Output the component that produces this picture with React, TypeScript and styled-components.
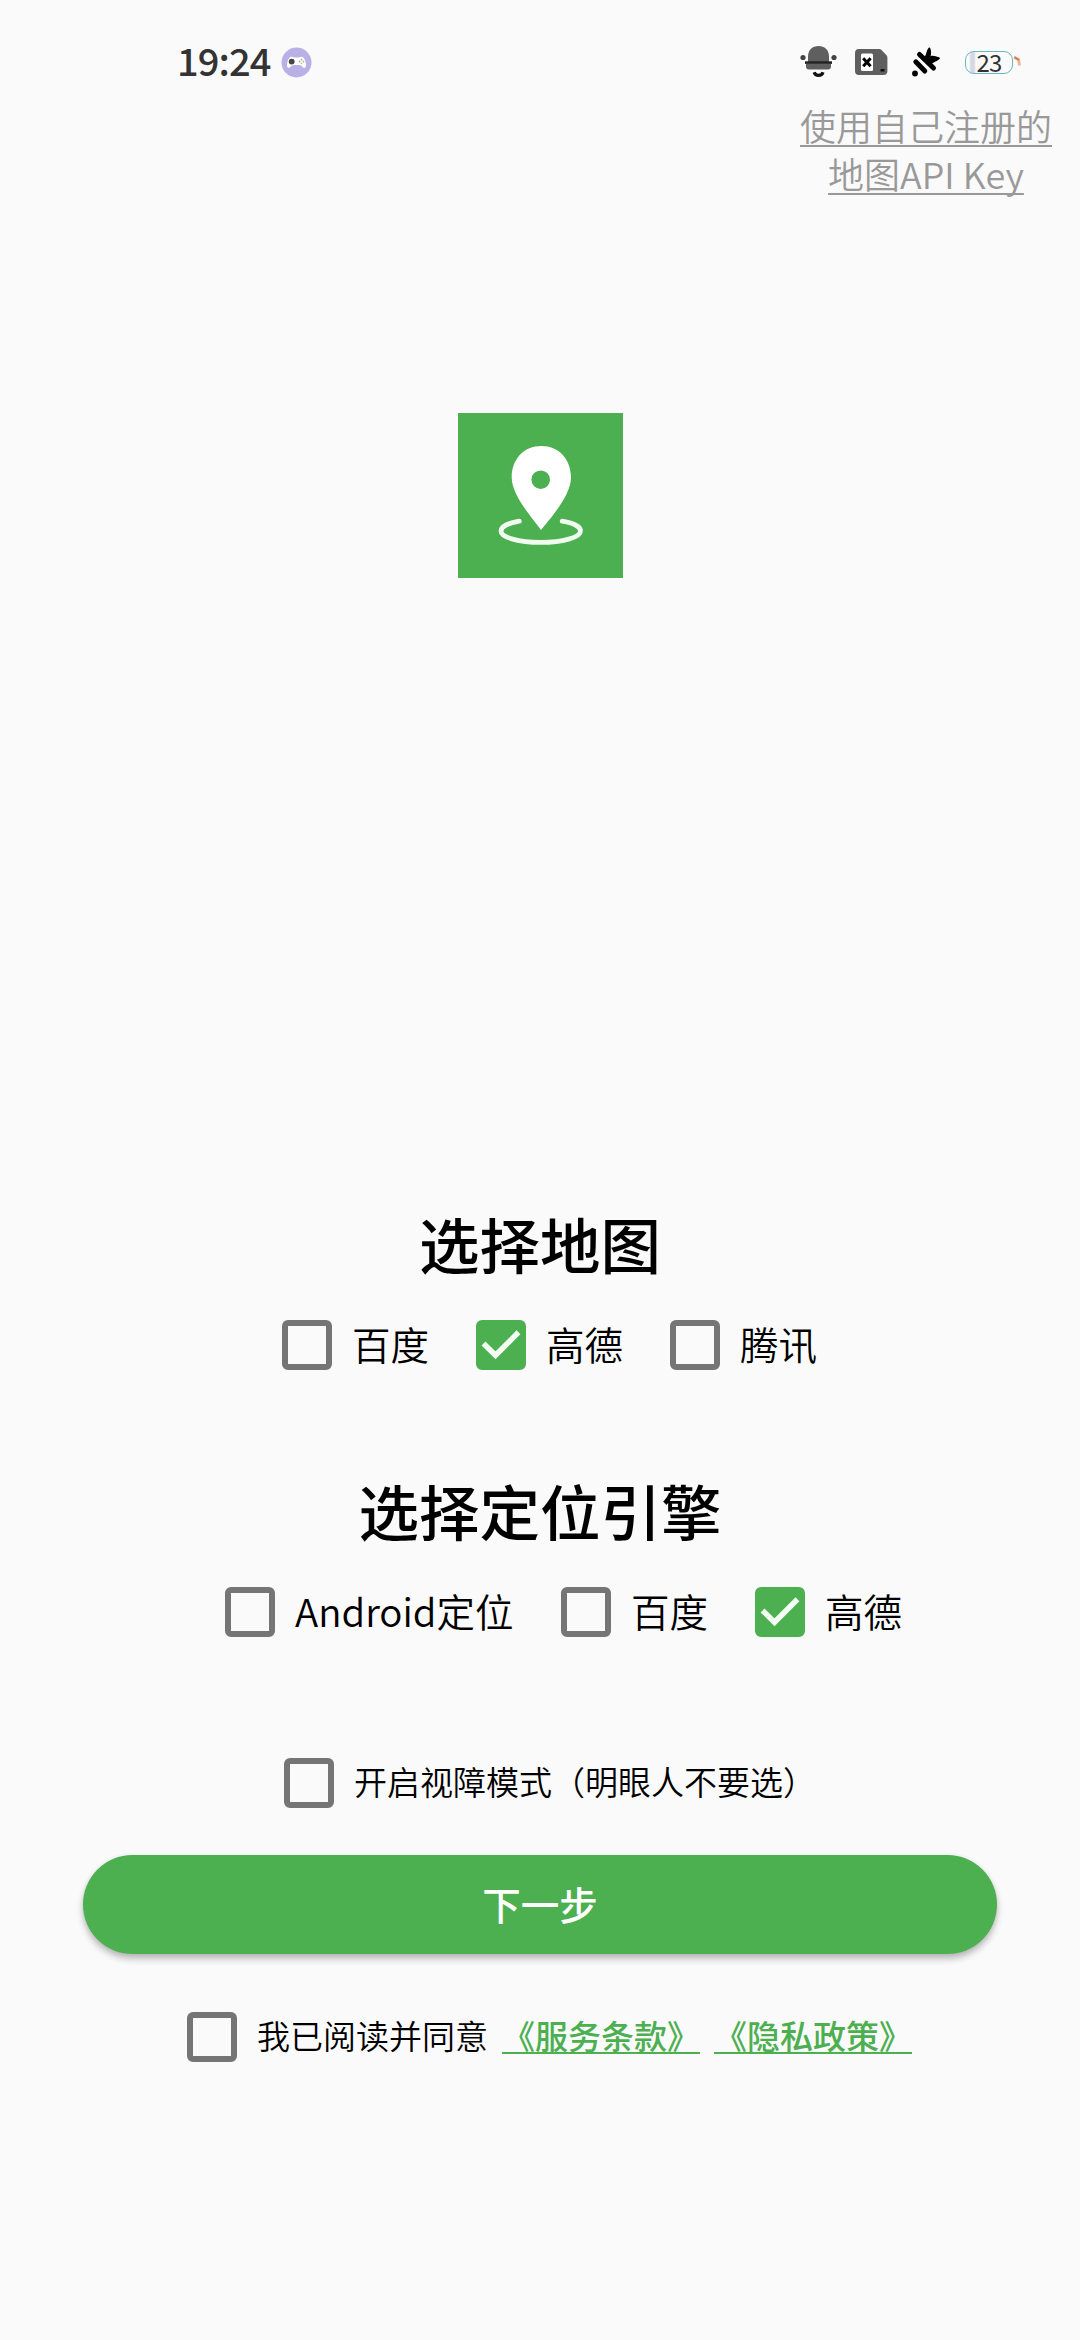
import React, { useState } from "react";
import styled, { createGlobalStyle } from "styled-components";

const GREEN = "#4caf50";

const GlobalStyle = createGlobalStyle`
  body {
    margin: 0;
    background: #fafafa;
    color: #000;
    font-family: "Noto Sans CJK SC", "Noto Sans", sans-serif;
  }
`;

const Screen = styled.main`
  box-sizing: border-box;
  width: 1080px;
  height: 2340px;
  display: flex;
  flex-direction: column;
  background: #fafafa;
  overflow: hidden;
`;

const StatusBar = styled.header`
  box-sizing: border-box;
  height: 101px;
  padding: 22px 58px 0 177px;
  display: flex;
  align-items: flex-start;
  justify-content: space-between;
`;

const StatusGroup = styled.div<{ $gap: number }>`
  display: flex;
  align-items: center;
  gap: ${(p) => p.$gap}px;
  height: 80px;
`;

const Clock = styled.time`
  width: 94px;
  font-size: 38px;
  font-weight: 500;
  line-height: 76px;
  height: 80px;
  letter-spacing: -0.9px;
  color: #333;
  white-space: nowrap;
`;

const KeyLink = styled.a`
  align-self: flex-end;
  width: 252px;
  margin-right: 28px;
  font-size: 36px;
  font-weight: 350;
  line-height: 48px;
  text-align: center;
  color: #999;
  white-space: nowrap;
  text-decoration: underline;
  text-decoration-thickness: 2px;
  text-underline-offset: 4px;
  text-decoration-skip-ink: none;
`;

const Logo = styled.div`
  align-self: center;
  width: 165px;
  height: 165px;
  margin-top: 216px;
  background: ${GREEN};
`;

const Heading = styled.h1<{ $top: number }>`
  margin: ${(p) => p.$top}px 0 0;
  height: 80px;
  line-height: 76px;
  font-size: 60.5px;
  font-weight: 500;
  text-align: center;
`;

const OptionRow = styled.div<{ $top: number; $left: number }>`
  display: flex;
  align-items: center;
  gap: 47px;
  height: 50px;
  margin-top: ${(p) => p.$top}px;
  padding-left: ${(p) => p.$left}px;
`;

const Option = styled.label<{ $size: number }>`
  display: flex;
  align-items: center;
  gap: 20px;
  height: 50px;
  font-size: ${(p) => p.$size}px;
  font-weight: 350;
  white-space: nowrap;
`;

const Box = styled.span<{ $on: boolean }>`
  box-sizing: border-box;
  flex: none;
  width: 50px;
  height: 50px;
  border: 6px solid ${(p) => (p.$on ? GREEN : "#757575")};
  border-radius: 6px;
  background: ${(p) => (p.$on ? GREEN : "transparent")};
  display: flex;
  align-items: center;
  justify-content: center;

  svg {
    flex: none;
  }
`;

const OptionText = styled.span<{ $width?: number }>`
  width: ${(p) => (p.$width ? `${p.$width}px` : "auto")};
  height: 50px;
  line-height: 47px;
`;

const NextButton = styled.button`
  align-self: center;
  width: 914px;
  height: 99px;
  margin-top: 47px;
  padding: 0 0 2px;
  border: 0;
  border-radius: 50px;
  background: ${GREEN};
  color: #fff;
  font: 500 38.5px/97px "Noto Sans CJK SC", sans-serif;
  box-shadow: 0 5px 7px rgba(0, 0, 0, 0.24), 0 1px 5px rgba(0, 0, 0, 0.08);
`;

const Agreement = styled.div`
  display: flex;
  align-items: center;
  height: 50px;
  margin-top: 58px;
  padding-left: 187px;
`;

const TermsLink = styled.a`
  margin-left: 14px;
  height: 50px;
  font-size: 33px;
  font-weight: 500;
  line-height: 47px;
  color: ${GREEN};
  white-space: nowrap;
  text-decoration: underline;
  text-decoration-thickness: 2px;
  text-underline-offset: 3px;
  text-decoration-skip-ink: none;
`;

function GameIcon() {
  return (
    <svg width="31" height="31" viewBox="0 0 31 31">
      <circle cx="15.5" cy="15.5" r="15" fill="#b9b0e6" />
      <path
        d="M10 9.800C12 9.300 12.400 10.500 15.500 10.500S19 9.300 21 9.800C23.800 10.500 25.200 16 24.900 19.100C24.700 21.400 22.500 21.300 21.100 19.500C20.300 18.500 19.600 18 15.500 18S10.700 18.500 9.900 19.500C8.500 21.300 6.300 21.400 6.100 19.100C5.800 16 7.200 10.500 10 9.800z"
        fill="#fff"
      />
      <circle cx="10.700" cy="14.600" r="2.900" fill="#444" />
      <g fill="#aaa">
        <circle cx="20.500" cy="12.600" r=".9" />
        <circle cx="20.500" cy="16.400" r=".9" fill="#b8c860" />
        <circle cx="18.600" cy="14.500" r=".9" />
        <circle cx="22.400" cy="14.500" r=".9" fill="#d9a0a0" />
      </g>
    </svg>
  );
}

function BellIcon() {
  return (
    <svg width="37" height="34" viewBox="0 0 37 34">
      <path d="M8 17V11.500C8 5 12.500 1 18.500 1S29 5 29 11.500V17z" fill="#5f5f5f" />
      <path d="M6 19h25v2.500a3 3 0 0 1-3 3H9a3 3 0 0 1-3-3z" fill="#5f5f5f" />
      <path d="M5 16.300h27v2.600H5z" fill="#222" />
      <path d="M14.200 27.200a4.600 4.600 0 0 0 8.800 0" fill="none" stroke="#111" strokeWidth="3.200" />
      <circle cx="3" cy="12.500" r="2.600" fill="#444" />
      <circle cx="34" cy="12.500" r="2.600" fill="#444" />
    </svg>
  );
}

const SimSvg = styled.svg`
  margin: 0 6px 0 0;
`;

function SimIcon() {
  return (
    <SimSvg width="33" height="28" viewBox="0 0 33 28">
      <path
        d="M4 1h20.500a3 3 0 0 1 2 .9l5 5.300a3 3 0 0 1 .9 2V23a4 4 0 0 1-4 4H4a4 4 0 0 1-4-4V5a4 4 0 0 1 4-4z"
        fill="#5f5f5f"
      />
      <rect x="6" y="5.500" width="12" height="17.500" rx="1.500" fill="#fff" />
      <path d="M8.200 10.300l7.400 8M15.600 10.300l-7.400 8" stroke="#000" strokeWidth="3" />
      <rect x="25.500" y="21" width="4" height="2.500" fill="#111" />
    </SimSvg>
  );
}

function SatelliteIcon() {
  return (
    <svg width="28" height="30" viewBox="0 0 28 30">
      <g stroke="#000" strokeLinecap="round" strokeWidth="5" fill="none">
        <path d="M7.500 7.500l14 13.500" />
        <path d="M3.800 14.800l9 9.200" />
      </g>
      <path
        d="M12 10C14.500 9 14 4 16.500 1C17.200.2 18 .4 18.300 1.200C19.300 4 19.300 7 18.600 9.300C21 8 23.500 9.500 27 10.200C28.200 10.600 28.200 11.500 27.200 12.300C24.500 14.500 21.500 15.500 19 17z"
        fill="#000"
      />
      <circle cx="3" cy="26.500" r="2.900" fill="#000" />
    </svg>
  );
}

const BatteryWrap = styled.div`
  display: flex;
  align-items: flex-start;
  margin-left: 7px;
`;

const BatteryShell = styled.div`
  box-sizing: border-box;
  width: 48px;
  height: 23px;
  border: 1.5px solid #69b7c4;
  border-radius: 9px;
  background: linear-gradient(90deg, #fafafa 3px, #d4d8e2 5px, #d4d8e2 8px, #fafafa 10px);
  font-size: 24px;
  line-height: 19px;
  letter-spacing: -0.8px;
  text-align: center;
  color: #333;
`;

function BatteryTip() {
  return (
    <svg width="9" height="18" viewBox="0 0 9 18">
      <path d="M1 6.500L5.500 8.500L6.500 14.500" fill="none" stroke="#f3b08e" strokeWidth="2.800" />
      <path d="M1.500 6l4.500 3" stroke="#cc7a55" strokeWidth="1.800" />
    </svg>
  );
}

function PinArt() {
  return (
    <svg width="165" height="165" viewBox="0 0 165 165">
      <path
        fillRule="evenodd"
        fill="#fff"
        d="M83 117C76 107 53.700 83 53.700 64.500C53.700 46 66 33 83.300 33S113 46 113 64.500C113 83 91 107 83 117zM82.700 57.400a9.300 9.300 0 1 0 0 18.600a9.300 9.300 0 1 0 0-18.600z"
      />
      <path
        d="M61.300 108.200C50 110 43 113.600 43 118C43 124.500 61 129.400 82.700 129.400S122.500 124.500 122.500 118C122.500 113.600 115.500 110 104.200 108.200"
        fill="none"
        stroke="#effcef"
        strokeWidth="4.800"
        strokeLinecap="round"
      />
    </svg>
  );
}

function Tick() {
  return (
    <svg width="50" height="50" viewBox="0 0 50 50">
      <path d="M7.500 23.500L19.500 35.300L42.500 12.300" fill="none" stroke="#f2fff2" strokeWidth="5.500" />
    </svg>
  );
}

interface CheckProps {
  label: string;
  size?: number;
  width?: number;
  initial?: boolean;
}

function Check({ label, size = 38.5, width, initial = false }: CheckProps) {
  const [on, setOn] = useState(initial);
  return (
    <Option $size={size} onClick={() => setOn(!on)}>
      <Box $on={on}>{on && <Tick />}</Box>
      <OptionText $width={width}>{label}</OptionText>
    </Option>
  );
}

export default function App() {
  return (
    <>
      <GlobalStyle />
      <Screen>
        <StatusBar>
          <StatusGroup $gap={10}>
            <Clock>19:24</Clock>
            <GameIcon />
          </StatusGroup>
          <StatusGroup $gap={18}>
            <BellIcon />
            <SimIcon />
            <SatelliteIcon />
            <BatteryWrap>
              <BatteryShell>23</BatteryShell>
              <BatteryTip />
            </BatteryWrap>
          </StatusGroup>
        </StatusBar>
        <KeyLink>
          使用自己注册的
          <br />
          地图API Key
        </KeyLink>
        <Logo>
          <PinArt />
        </Logo>

        <Heading $top={627}>选择地图</Heading>
        <OptionRow $top={35} $left={282}>
          <Check label="百度" width={77} />
          <Check label="高德" width={77} initial />
          <Check label="腾讯" width={77} />
        </OptionRow>

        <Heading $top={102}>选择定位引擎</Heading>
        <OptionRow $top={35} $left={225}>
          <Check label="Android定位" width={219} />
          <Check label="百度" width={77} />
          <Check label="高德" width={77} initial />
        </OptionRow>

        <OptionRow $top={121} $left={284}>
          <Check label="开启视障模式（明眼人不要选）" size={33} />
        </OptionRow>
        <NextButton>下一步</NextButton>
        <Agreement>
          <Check label="我已阅读并同意" size={33} />
          <TermsLink>《服务条款》</TermsLink>
          <TermsLink>《隐私政策》</TermsLink>
        </Agreement>
      </Screen>
    </>
  );
}
